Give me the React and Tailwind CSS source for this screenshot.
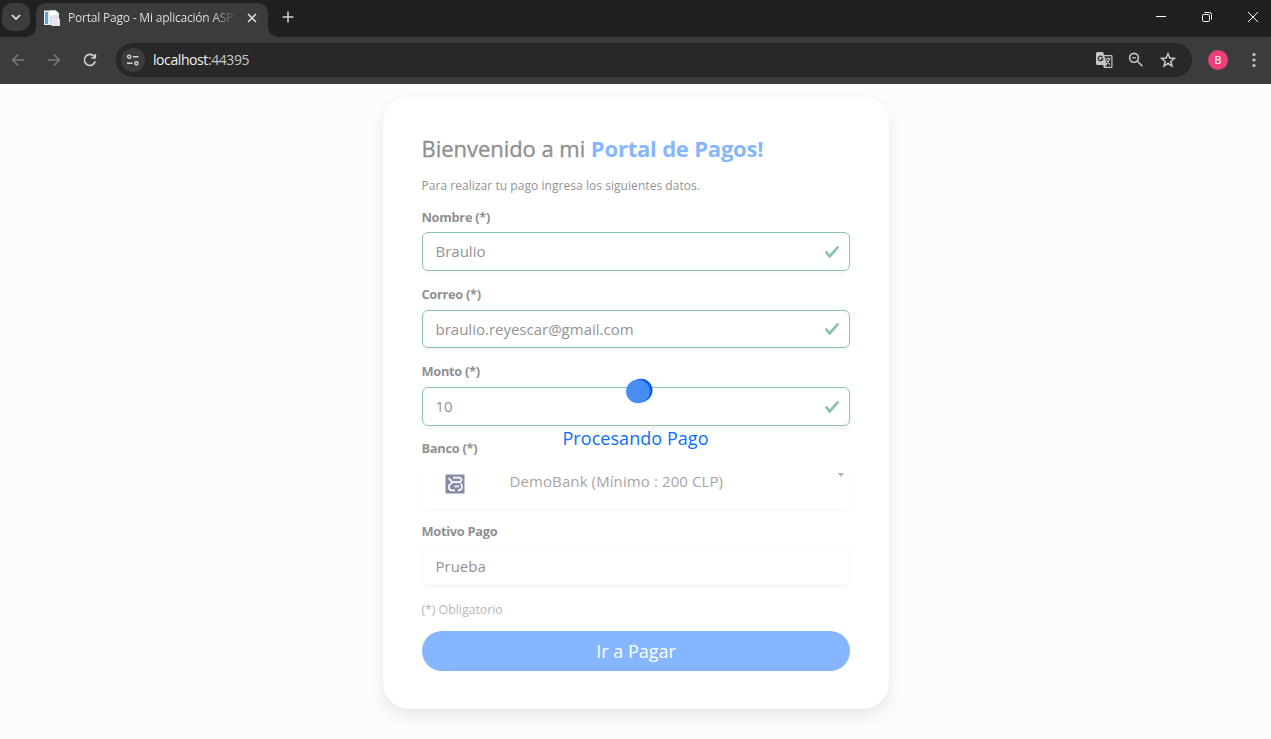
import React from "react";

const Arrow = ({ flip }) => (
  <svg width="16" height="16" viewBox="0 0 16 16" fill="none" stroke="#7b7b7b" strokeWidth="1.5" className={flip ? "rotate-180" : ""}>
    <path d="M14 8H2.8M8 2.6 2.6 8 8 13.4" />
  </svg>
);

function TabStrip() {
  return (
    <div className="flex h-[37px] bg-[#1f2020]">
      <div className="mt-[3px] ml-[2px] flex h-7 w-7 items-center justify-center rounded-[10px] bg-[#3c3c3c]">
        <svg width="10" height="10" viewBox="0 0 10 10" fill="none" stroke="#e3e3e3" strokeWidth="1.7"><path d="M1 3l4 4 4-4" /></svg>
      </div>
      <svg className="mt-[27px] -ml-[4px]" width="10" height="10" viewBox="0 0 10 10"><path d="M0 10A10 10 0 0 0 10 0V10Z" fill="#3c3c3c" /></svg>
      <div className="mt-[3px] flex h-[34px] w-[232px] items-center rounded-t-[10px] bg-[#3c3c3c] pb-[5px] pl-2">
        <svg width="16" height="16" viewBox="0 0 16 16" className="shrink-0">
          <path d="M0 .5H12L15 3V15H0Z" fill="#e9edf0" />
          <path d="M1 2H4V14H1Z" fill="#5ba7dc" />
          <path d="M6 .5H12V5H6Z" fill="#fff" />
          <path d="M7.500 7.500H14L16 9.500V16H7.500Z" fill="#f4f4f6" stroke="#b3b9c8" strokeWidth=".6" />
          <path d="M9 10H13M9 12H14.500M9 14H14.500" stroke="#c9ced8" strokeWidth=".8" />
        </svg>
        <span className="ml-2 w-[168px] bg-linear-to-r from-[#e6e6e6] from-86% to-[#3c3c3c] bg-clip-text font-['Open_Sans','Noto_Sans',sans-serif] text-[12px] leading-4 tracking-[-0.2px] whitespace-nowrap text-transparent">Portal Pago - Mi aplicación ASP.</span>
        <svg className="ml-[11px]" width="10" height="10" viewBox="0 0 10 10" stroke="#e3e3e3" strokeWidth="1.5"><path d="M1 1l8 8M9 1L1 9" /></svg>
      </div>
      <svg className="mt-[27px]" width="10" height="10" viewBox="0 0 10 10"><path d="M10 10A10 10 0 0 1 0 0V10Z" fill="#3c3c3c" /></svg>
      <svg className="mt-[11px] ml-1" width="12" height="12" viewBox="0 0 12 12" stroke="#d0d0d0" strokeWidth="1.5"><path d="M6 .5v11M.5 6h11" /></svg>
      <div className="mt-[12px] ml-auto flex h-[10px] items-center gap-[36px] pr-[13px]">
        <svg width="10" height="10" viewBox="0 0 10 10" stroke="#fff"><path d="M0 4.5h10" /></svg>
        <svg width="10" height="10" viewBox="0 0 10 10" stroke="#fff" fill="none"><rect x=".5" y="2.5" width="7" height="7" rx="1.2" /><path d="M2.5.5H7.5Q9.5.5 9.5 2.5V7.5" /></svg>
        <svg width="10" height="10" viewBox="0 0 10 10" stroke="#fff"><path d="M0 0l10 10M10 0L0 10" /></svg>
      </div>
    </div>
  );
}

function Toolbar() {
  return (
    <div className="flex h-[47px] items-center bg-[#3c3c3c] pb-px pl-[10px]">
      <div className="flex w-[106px] items-center gap-5">
        <Arrow />
        <Arrow flip />
        <svg width="16" height="16" viewBox="0 0 16 16" fill="none" stroke="#d0d0d0" strokeWidth="1.6"><path d="M13.2 9.3A5.5 5.5 0 1 1 12.2 4.5L13.2 5.6" /><path d="M13.3 2V6H9.3" /></svg>
      </div>
      <div className="flex h-[34px] w-[1076px] items-center rounded-full bg-[#282828] pr-4 pl-[5px]">
        <div className="flex h-6 w-6 items-center justify-center rounded-full bg-[#3c3c3c]">
          <svg width="14" height="12" viewBox="0 0 14 12" fill="none" stroke="#d4d4d4" strokeWidth="1.4"><circle cx="3.2" cy="2.7" r="1.6" /><path d="M7 2.7h5.5M1 9.3h5.5" /><circle cx="10.4" cy="9.3" r="1.6" /></svg>
        </div>
        <span className="ml-2 font-['Open_Sans','Noto_Sans',sans-serif] text-[14px] leading-5 tracking-[-0.42px] text-[#f1f1f1]">localhost<span className="text-[#c9c9c9]">:44395</span></span>
        <div className="ml-auto flex items-center gap-4">
          <svg width="16" height="16" viewBox="0 0 16 16" overflow="visible"><path d="M1.500 0H7L8 3H15Q16.500 3 16.500 4.500V14.500Q16.500 16 15 16H8L7 13H1.500Q0 13 0 11.500V1.500Q0 0 1.500 0Z" fill="#c7c7c7" /><path d="M8.400 4.200H15.300V14.800H8.800L11 13Z" fill="#282828" /><path d="M6.500 5.200A2.300 2.300 0 1 0 6.800 6.800H4.800" fill="none" stroke="#282828" strokeWidth="1.200" /><path d="M9.400 6.800h5.200M12 5.600v1.200M13.700 6.800Q12.800 10 10.200 12M10.500 8Q11.500 10.500 13.900 12.500" fill="none" stroke="#c7c7c7" strokeWidth="1.100" /></svg>
          <svg width="16" height="16" viewBox="0 0 16 16" fill="none" stroke="#c7c7c7" strokeWidth="1.600"><circle cx="6" cy="5.800" r="4.400" /><path d="M9.200 9L14.400 14.200" /><path d="M4 5.800h4" strokeWidth="1.200" /></svg>
          <svg width="16" height="16" viewBox="0 0 16 16" fill="none" stroke="#c7c7c7" strokeWidth="1.500"><path d="M8 1.800L9.800 6.100 14.400 6.400 10.900 9.400 12 14 8 11.500 4 14 5.100 9.400 1.600 6.400 6.200 6.100Z" /></svg>
        </div>
      </div>
      <div className="ml-4 flex h-5 w-5 items-center justify-center rounded-full bg-[#ec407a] pt-px font-['Roboto',sans-serif] text-[11px] leading-none text-white">B</div>
      <svg className="ml-[24px]" width="4" height="16" viewBox="0 0 4 16" fill="#c7c7c7"><circle cx="2" cy="2.500" r="1.600" /><circle cx="2" cy="8" r="1.600" /><circle cx="2" cy="13.500" r="1.600" /></svg>
    </div>
  );
}

const Label = ({ children, className }) => (
  <div className={`h-[18px] text-[12.8px] leading-[18px] font-bold tracking-[-0.28px] text-[#8f9091] ${className}`}>{children}</div>
);

function ValidField({ value, className }) {
  return (
    <div className={`flex items-center justify-between rounded-[6px] border border-[#8cc3aa] pr-[9px] pl-[13px] shadow-[0_2px_4px_rgba(0,0,0,0.05)] ${className}`}>
      <span>{value}</span>
      <svg width="16" height="16" viewBox="0 0 8 8" fill="#8cc3aa"><path d="M2.300 6.730L.6 4.530c-.4-1.040.46-1.400 1.100-.8l1.100 1.400 3.400-3.800c.6-.63 1.600-.27 1.200.7l-4 4.600c-.43.500-.8.400-1.100.1z" /></svg>
    </div>
  );
}

function PaymentCard() {
  return (
    <div className="flex h-[612px] w-[506px] flex-col rounded-[26px] bg-white px-[39px] font-['Open_Sans','Noto_Sans',sans-serif] text-[15px] text-[#929394] shadow-[0_7px_14px_rgba(0,0,0,0.08)]">
      <h1 className="mt-[36px] h-[30px] text-[22px] leading-[30px] font-medium tracking-[-0.1px] whitespace-nowrap text-[#8f9091]"><span className="tracking-[-0.04px] [-webkit-text-stroke:0.35px_#8f9091]">Bienvenido a mi </span><span className="font-bold tracking-[-0.2px] text-[#86b6ff]">Portal de Pagos!</span></h1>
      <p className="mt-[14px] h-[18px] text-[12px] leading-[18px] tracking-[0.05px] whitespace-nowrap">Para realizar tu pago ingresa los siguientes datos.</p>
      <Label className="mt-[13px]">Nombre (*)</Label>
      <ValidField value="Braulio" className="mt-[6px] h-[39px]" />
      <Label className="mt-[14px]">Correo (*)</Label>
      <ValidField value="braulio.reyescar@gmail.com" className="mt-[7px] h-[38px]" />
      <Label className="mt-[14px]">Monto (*)</Label>
      <ValidField value="10" className="mt-[7px] h-[39px]" />
      <Label className="mt-[13px]">Banco (*)</Label>
      <div className="mt-[5px] flex h-[47px] rounded-[6px] pr-[6px] pl-[23px] text-[#a5a5a6] shadow-[0_2px_3px_rgba(0,0,0,0.04)]">
        <svg className="mt-[12px]" width="20" height="20" viewBox="0 0 20 20"><path d="M.500.500h19v19H.500Z" fill="#888ba5" /><path d="M3.500 4L7.500 8.200H14Q16.500 8 16.500 6Q16.500 3.700 14 3.700H8M7.500 8.200L4 11.500V13.500Q4 16.300 7 16.300H10M9.500 12.300H14M15.500 9.500Q17 11 17 13Q17 16.300 13 16.300" fill="none" stroke="#fff" strokeWidth="1.700" /></svg>
        <span className="mt-[8px] ml-[45px] leading-[22px] tracking-[0.1px]">DemoBank (Mínimo : 200 CLP)</span>
        <svg className="mt-[11px] ml-auto" width="6" height="4" viewBox="0 0 6 4"><path d="M0 0h6L3 4Z" fill="#b0b0b0" /></svg>
      </div>
      <Label className="mt-[13px]">Motivo Pago</Label>
      <div className="mt-[7px] flex h-[38px] items-center rounded-[6px] border border-[#fafafa] pl-[13px] shadow-[0_2px_3px_rgba(0,0,0,0.04)]">Prueba</div>
      <div className="mt-[16px] h-[18px] text-[12.500px] leading-[18px] tracking-[-0.1px] text-[#b7b8b9]">(*) Obligatorio</div>
      <button className="mt-[12px] h-10 w-full rounded-full bg-[#86b6ff] pl-px text-[18px] leading-10 text-white">Ir a Pagar</button>
    </div>
  );
}

export default function App() {
  return (
    <div className="flex h-[739px] w-[1271px] flex-col overflow-hidden">
      <TabStrip />
      <Toolbar />
      <main className="relative flex flex-1 justify-center bg-[#fbfcfc] pt-[13px]">
        <PaymentCard />
        <div className="absolute inset-x-0 top-[294px] flex flex-col items-center">
          <svg className="ml-[7px]" width="28" height="26" viewBox="0 0 28 26"><circle cx="16" cy="12.300" r="11.500" fill="#0754d0" /><circle cx="14.500" cy="13" r="11.500" fill="#0d6efd" /><circle cx="12.800" cy="13.500" r="11.700" fill="#478df4" /></svg>
          <span className="mt-[20px] h-[28px] font-['Open_Sans','Noto_Sans',sans-serif] text-[18px] leading-[28px] tracking-[0.05px] text-[#0d6efd]">Procesando Pago</span>
        </div>
      </main>
    </div>
  );
}
